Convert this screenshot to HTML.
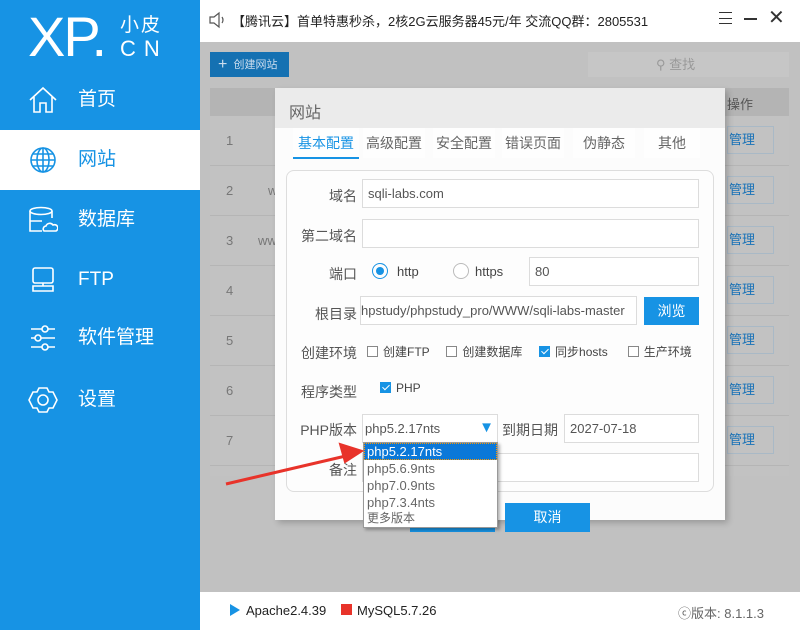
<!DOCTYPE html>
<html><head><meta charset="utf-8"><style>
*{box-sizing:border-box;margin:0;padding:0}
body{width:800px;height:630px;overflow:hidden;font-family:"Liberation Sans","Noto Sans CJK SC",sans-serif;position:relative;background:#c1c1c1;color:#555}
.abs{position:absolute}
#side{left:0;top:0;width:200px;height:630px;background:#1793e4;color:#fff}
.nav{position:absolute;left:0;width:200px;height:60px;font-size:19px;line-height:60px;padding-left:78px}
.nav svg{position:absolute;left:28px;top:15px}
#top{left:200px;top:0;width:600px;height:42px;background:#fff;font-size:13px;color:#222}
#foot{left:200px;top:592px;width:600px;height:38px;background:#fff;font-size:13px;color:#222}
.row{position:absolute;left:210px;width:579px;height:50px;border-bottom:1px solid #b5b5b5;font-size:13px;color:#777}
.mg{position:absolute;left:517px;top:10px;width:47px;height:28px;border:1px solid #a9b9c6;color:#1872b8;font-size:13px;line-height:26px;padding-left:1px}
#modal{left:275px;top:88px;width:450px;height:432px;background:#fcfcfc;box-shadow:3px 3px 6px rgba(0,0,0,.2)}
.lbl{position:absolute;font-size:14px;color:#555;text-align:right}
.inp{position:absolute;border:1px solid #dcdcdc;background:#fff;font-size:13px;color:#555;padding-left:5px}
.cb{display:inline-block;width:11px;height:11px;border:1px solid #888;vertical-align:-1px;margin-right:5px;background:#fff}
.cbk{background:#1793e4;border-color:#1793e4;position:relative}
.cbk:after{content:"";position:absolute;left:3px;top:0px;width:3px;height:6px;border:solid #fff;border-width:0 1.5px 1.5px 0;transform:rotate(45deg)}
.tab{position:absolute;top:40px;height:30px;font-size:14px;line-height:30px;text-align:center;color:#666;background:#fefefe}
</style></head><body>
<div id="side" class="abs">
 <div class="abs" style="left:28px;top:7px;font-size:56px;font-weight:normal;letter-spacing:-2px;line-height:60px">XP.</div>
 <div class="abs" style="left:120px;top:10px;font-size:19px;letter-spacing:2px">小皮</div>
 <div class="abs" style="left:120px;top:36px;font-size:22px;letter-spacing:8px">CN</div>
 <div class="nav" style="top:70px"><svg width="30" height="30" viewBox="0 0 30 30" fill="none" stroke="#fff" stroke-width="1.6"><path d="M2 15L15 3 28 15M6 12V27H12V18H18V27H24V12"/></svg>首页</div>
 <div class="nav" style="top:130px;background:#fff;color:#1793e4"><svg width="30" height="30" viewBox="0 0 30 30" fill="none" stroke="#1793e4" stroke-width="1.6"><circle cx="15" cy="15" r="12"/><ellipse cx="15" cy="15" rx="6" ry="12"/><path d="M3 15H27M15 3V27M5 9H25M5 21H25"/></svg>网站</div>
 <div class="nav" style="top:190px"><svg width="30" height="30" viewBox="0 0 30 30" fill="none" stroke="#fff" stroke-width="1.6"><ellipse cx="13" cy="6" rx="11" ry="3.5"/><path d="M2 6V26H14M24 6V13M2 16H14"/><path d="M16 26H28A3 3 0 0 0 25 20A4 4 0 0 0 18 21A3 3 0 0 0 16 26Z"/></svg>数据库</div>
 <div class="nav" style="top:250px"><svg width="30" height="30" viewBox="0 0 30 30" fill="none" stroke="#fff" stroke-width="1.6"><rect x="5" y="3" width="20" height="15" rx="2"/><path d="M15 18V21M5 21H25V26H5Z"/></svg>FTP</div>
 <div class="nav" style="top:308px"><svg width="30" height="30" viewBox="0 0 30 30" fill="none" stroke="#fff" stroke-width="1.6"><path d="M3 6H14M20 6H27M3 15H7M13 15H27M3 24H14M20 24H27"/><circle cx="17" cy="6" r="3"/><circle cx="10" cy="15" r="3"/><circle cx="17" cy="24" r="3"/></svg>软件管理</div>
 <div class="nav" style="top:370px"><svg width="30" height="30" viewBox="0 0 30 30" fill="none" stroke="#fff" stroke-width="1.6"><path d="M11 3H19L21 7 25 7 29 15 25 23 21 23 19 27H11L9 23 5 23 1 15 5 7 9 7Z"/><circle cx="15" cy="15" r="5"/></svg>设置</div>
</div>
<div id="top" class="abs">
 <svg class="abs" style="left:9px;top:11px" width="16" height="18" viewBox="0 0 16 18" fill="none" stroke="#555" stroke-width="1.2"><path d="M1 6H5L10 2V16L5 12H1Z M13 6Q15 9 13 12"/></svg>
 <div class="abs" style="left:32px;top:11px">【腾讯云】首单特惠秒杀，2核2G云服务器45元/年 交流QQ群：2805531</div>
 <div class="abs" style="left:519px;top:12px;width:13px;height:12px;border-top:1px solid #333;border-bottom:1px solid #333"></div>
 <div class="abs" style="left:519px;top:18px;width:13px;height:1px;background:#333"></div>
 <div class="abs" style="left:544px;top:18px;width:13px;height:2px;background:#333"></div>
 <div class="abs" style="left:568px;top:5px;font-size:20px;color:#333">✕</div>
</div>
<div class="abs" style="left:200px;top:42px;width:600px;height:550px;background:#c1c1c1"></div>
<div class="abs" style="left:210px;top:52px;width:79px;height:25px;background:#1571b2;color:#cde;font-size:11px;line-height:25px;padding-left:8px"><span style="font-size:16px;vertical-align:-1px">+</span>&nbsp; 创建网站</div>
<div class="abs" style="left:588px;top:52px;width:201px;height:25px;background:#c6c6c6;color:#999;font-size:13px;line-height:25px;padding-left:68px">⚲ 查找</div>
<div class="abs" style="left:210px;top:88px;width:579px;height:28px;background:#b4b4b4"></div>
<div class="abs" style="left:727px;top:94px;font-size:13px;color:#555">操作</div>
<div class="abs" style="left:210px;top:116px;width:579px;height:360px;background:#c2c2c2"></div>
<div class="row" style="top:116px"><span class="abs" style="left:16px;top:17px">1</span><div class="mg">管理</div></div>
<div class="row" style="top:166px"><span class="abs" style="left:16px;top:17px">2</span><span class="abs" style="left:58px;top:17px">w</span><div class="mg">管理</div></div>
<div class="row" style="top:216px"><span class="abs" style="left:16px;top:17px">3</span><span class="abs" style="left:48px;top:17px">ww</span><div class="mg">管理</div></div>
<div class="row" style="top:266px"><span class="abs" style="left:16px;top:17px">4</span><div class="mg">管理</div></div>
<div class="row" style="top:316px"><span class="abs" style="left:16px;top:17px">5</span><div class="mg">管理</div></div>
<div class="row" style="top:366px"><span class="abs" style="left:16px;top:17px">6</span><div class="mg">管理</div></div>
<div class="row" style="top:416px"><span class="abs" style="left:16px;top:17px">7</span><div class="mg">管理</div></div>
<div id="modal" class="abs">
 <div class="abs" style="left:0;top:0;width:450px;height:40px;background:#ebebeb;font-size:16px;color:#666;padding:11px 0 0 14px">网站</div>
 <div class="tab" style="left:18px;width:66px;color:#1793e4;border-bottom:2px solid #1793e4;height:31px">基本配置</div>
 <div class="tab" style="left:88px;width:62px">高级配置</div>
 <div class="tab" style="left:158px;width:62px">安全配置</div>
 <div class="tab" style="left:227px;width:62px">错误页面</div>
 <div class="tab" style="left:298px;width:62px">伪静态</div>
 <div class="tab" style="left:369px;width:56px">其他</div>
 <div class="abs" style="left:11px;top:82px;width:428px;height:322px;border:1px solid #ddd;border-radius:8px;background:#fdfdfd"></div>
 <div class="lbl" style="left:20px;width:62px;top:98px">域名</div>
 <div class="inp" style="left:87px;top:91px;width:337px;height:29px;line-height:27px">sqli-labs.com</div>
 <div class="lbl" style="left:20px;width:62px;top:138px">第二域名</div>
 <div class="inp" style="left:87px;top:131px;width:337px;height:29px"></div>
 <div class="lbl" style="left:20px;width:62px;top:176px">端口</div>
 <div class="abs" style="left:97px;top:175px;width:16px;height:16px;border:1px solid #1793e4;border-radius:50%"><div style="margin:3px;width:8px;height:8px;border-radius:50%;background:#1793e4"></div></div>
 <div class="abs" style="left:122px;top:176px;font-size:13px;color:#444">http</div>
 <div class="abs" style="left:178px;top:175px;width:16px;height:16px;border:1px solid #bbb;border-radius:50%;background:#fff"></div>
 <div class="abs" style="left:200px;top:176px;font-size:13px;color:#444">https</div>
 <div class="inp" style="left:254px;top:169px;width:170px;height:29px;line-height:27px">80</div>
 <div class="lbl" style="left:20px;width:62px;top:216px">根目录</div>
 <div class="inp" style="left:85px;top:208px;width:277px;height:29px;line-height:27px;padding-left:0;white-space:nowrap;overflow:hidden">hpstudy/phpstudy_pro/WWW/sqli-labs-master</div>
 <div class="abs" style="left:369px;top:209px;width:55px;height:28px;background:#1793e4;color:#fff;font-size:14px;text-align:center;line-height:28px">浏览</div>
 <div class="lbl" style="left:20px;width:62px;top:255px">创建环境</div>
 <div class="abs" style="left:92px;top:255px;font-size:12px;color:#444;white-space:nowrap"><span class="cb"></span>创建FTP&nbsp;&nbsp;&nbsp;&nbsp;&nbsp;<span class="cb"></span>创建数据库&nbsp;&nbsp;&nbsp;&nbsp;&nbsp;<span class="cb cbk"></span>同步hosts&nbsp;&nbsp;&nbsp;&nbsp;&nbsp;&nbsp;<span class="cb"></span>生产环境</div>
 <div class="lbl" style="left:20px;width:62px;top:294px">程序类型</div>
 <div class="abs" style="left:105px;top:293px;font-size:12px;color:#444"><span class="cb cbk"></span>PHP</div>
 <div class="lbl" style="left:20px;width:62px;top:332px">PHP版本</div>
 <div class="inp" style="left:87px;top:326px;width:136px;height:29px;line-height:27px;padding-left:2px">php5.2.17nts<span style="position:absolute;right:3px;top:-1px;color:#1793e4;font-size:15px">▼</span></div>
 <div class="lbl" style="left:227px;top:332px">到期日期</div>
 <div class="inp" style="left:289px;top:326px;width:135px;height:29px;line-height:27px">2027-07-18</div>
 <div class="lbl" style="left:20px;width:62px;top:372px">备注</div>
 <div class="inp" style="left:87px;top:365px;width:337px;height:29px"></div>
 <div class="abs" style="left:135px;top:415px;width:85px;height:29px;background:#1793e4"></div>
 <div class="abs" style="left:230px;top:415px;width:85px;height:29px;background:#1793e4;color:#fff;font-size:14px;text-align:center;line-height:29px">取消</div>
 <div class="abs" style="left:88px;top:354px;width:135px;height:86px;background:#fff;border:1px solid #999;box-shadow:2px 2px 3px rgba(0,0,0,.3);font-size:13px;color:#666;line-height:17px">
  <div style="background:#0b78d8;color:#fff;padding-left:3px;outline:1px dotted #f90;outline-offset:-1px">php5.2.17nts</div>
  <div style="padding-left:3px">php5.6.9nts</div>
  <div style="padding-left:3px">php7.0.9nts</div>
  <div style="padding-left:3px">php7.3.4nts</div>
  <div style="padding-left:3px;font-size:12px;line-height:15px">更多版本</div>
 </div>
</div>
<svg class="abs" style="left:0;top:0" width="800" height="630"><path d="M226 484L350 455" stroke="#e8332a" stroke-width="3"/><path d="M362 451L340 444 345 462Z" fill="#e8332a" stroke="#e8332a" stroke-width="2"/></svg>
<div id="foot" class="abs">
 <span class="abs" style="left:30px;top:12px;width:0;height:0;border-left:10px solid #1793e4;border-top:6px solid transparent;border-bottom:6px solid transparent"></span>
 <span class="abs" style="left:46px;top:11px">Apache2.4.39</span>
 <span class="abs" style="left:141px;top:12px;width:11px;height:11px;background:#e8332a"></span>
 <span class="abs" style="left:157px;top:11px">MySQL5.7.26</span>
 <span class="abs" style="left:478px;top:11px;color:#666">ⓒ版本: 8.1.1.3</span>
</div>
</body></html>
